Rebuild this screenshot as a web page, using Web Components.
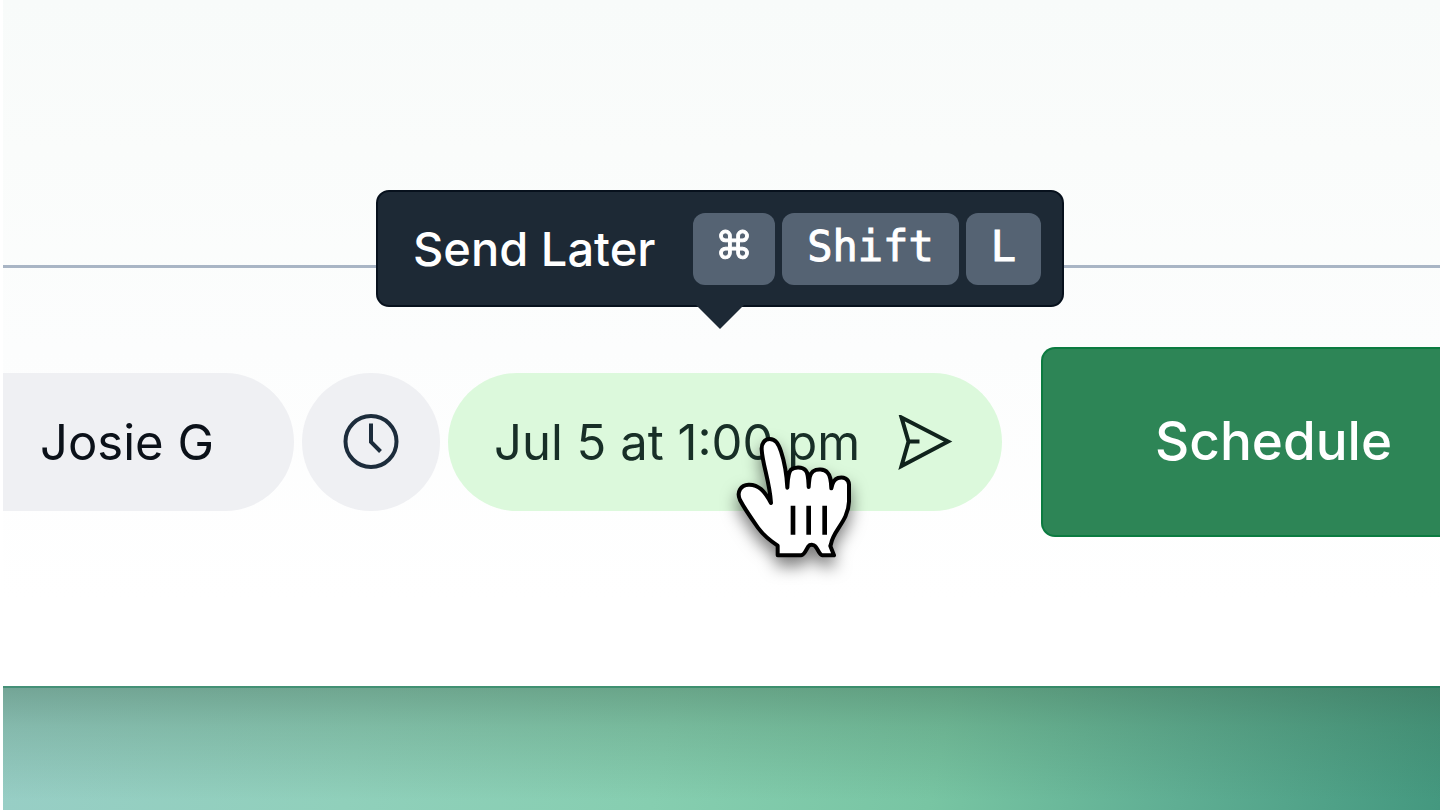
<!DOCTYPE html>
<html lang="en">
<head>
<meta charset="utf-8">
<meta name="viewport" content="width=device-width, initial-scale=1">
<title>Send Later</title>
<style>
body { margin: 0; background: #fff; font-family: Inter, "Liberation Sans", sans-serif; }
</style>
</head>
<body>
<compose-window>
  <compose-toolbar slot="toolbar">
    <compose-chip class="person" open-start>Josie G</compose-chip>
    <compose-chip round label="Reminder"><clock-icon></clock-icon></compose-chip>
    <compose-chip tone="green">Jul 5 at 1:00 pm<send-icon></send-icon><hand-cursor slot="over"></hand-cursor></compose-chip>
    <schedule-button>Schedule</schedule-button>
  </compose-toolbar>
  <shortcut-tooltip slot="tooltip">Send Later
    <key-cap slot="keys" symbol>⌘</key-cap>
    <key-cap slot="keys">Shift</key-cap>
    <key-cap slot="keys">L</key-cap>
  </shortcut-tooltip>
</compose-window>
<script>
function define(name, html) {
  const template = document.createElement('template');
  template.innerHTML = html;
  customElements.define(name, class extends HTMLElement {
    constructor() {
      super();
      this.attachShadow({ mode: 'open' }).append(template.content.cloneNode(true));
    }
    connectedCallback() {
      const label = this.getAttribute('label');
      const button = this.shadowRoot.querySelector('button');
      if (label && button) button.setAttribute('aria-label', label);
    }
  });
}

define('compose-window', `
<style>
:host { display: flex; flex-direction: column; min-height: 100vh; box-sizing: border-box; padding-left: 3px; position: relative; overflow: hidden; }
main { background: linear-gradient(#f8fbfa, #fafcfb 150px, #fcfdfd 350px, #fff 600px); }
.draft { height: 265px; border-bottom: 3px solid #a9b5c5; }
.backdrop { flex: 1; min-height: 124px; box-sizing: border-box; border-top: 2px solid rgba(0, 115, 75, .4);
  background:
    linear-gradient(rgba(55, 95, 70, .38), rgba(55, 100, 70, .2) 40px, rgba(55, 100, 70, 0) 115px) border-box,
    linear-gradient(102deg, #98cec6, #90d0bb 25%, #86ceb0 46%, #78c5a3 65%, #5fae93 82%, #44987f) border-box; }
</style>
<main><div class="draft"></div><slot name="toolbar"></slot></main>
<div class="backdrop"></div>
<slot name="tooltip"></slot>`);

define('compose-toolbar', `
<style>
:host { display: flex; align-items: center; gap: 8px; padding: 79px 0 149px; white-space: nowrap; }
</style>
<slot></slot>`);

define('compose-chip', `
<style>
:host { display: block; flex: none; position: relative; }
button { display: flex; align-items: center; gap: 38px; height: 138px; margin: 0; border: 0; border-radius: 69px; padding: 2px 48px 0 46px;
  background: #eff0f3; color: #0b1119; font: 400 49px/64px Inter, "Liberation Sans", sans-serif; }
:host([open-start]) button { border-radius: 0 69px 69px 0; padding: 2px 80px 0 37px; }
:host([round]) button { width: 138px; padding: 0; justify-content: center; }
:host([tone="green"]) button { background: #dcf9dc; color: #182f27; }
</style>
<button type="button"><slot></slot></button><slot name="over"></slot>`);

define('clock-icon', `
<style>:host { display: block; } svg { display: block; }</style>
<svg width="56" height="56" viewBox="0 0 56 56" fill="none" stroke="#1c2c3b" stroke-width="4">
<circle cx="28" cy="27.500" r="25.500"/><path d="M28 9.500V28l9.500 9.500"/></svg>`);

define('send-icon', `
<style>:host { display: block; } svg { display: block; }</style>
<svg width="56" height="56" viewBox="0 0 56 56" fill="none" stroke="#10231c" stroke-width="4">
<path d="M3.500 2.500 50 26.500 3.500 51 10.500 26.500ZM10.500 26.500h11"/></svg>`);

define('hand-cursor', `
<style>:host { display: block; position: absolute; left: 272px; top: 47px; pointer-events: none; }
svg { display: block; overflow: visible; filter: drop-shadow(0 9px 8px rgba(0, 0, 0, .5)); }</style>
<svg width="150" height="170" viewBox="0 0 450 510" fill="none" stroke="#000" stroke-width="12" stroke-linejoin="round" stroke-linecap="round">
<path fill="#fff" d="M125 88C124 70 134 57 149 57C167 57 175 71 183 94C192 121 199 148 202 203C204 174 204 158 213 149C224 140 247 140 257 151C265 160 265 172 266 201C268 175 269 162 279 154C291 146 313 147 322 157C331 166 333 178 334 205C337 188 341 178 354 174C371 169 386 177 387 193L387 245C385 304 338 332 333 372L331 378L342 406L307 406C298 405 295 389 286 379C281 373 270 372 265 379C258 389 254 405 243 406L173 406L173 377C140 355 127 341 116 326C97 299 75 269 60 240C49 216 62 195 86 194C116 193 134 214 153 249C149 184 127 132 125 88Z"/>
<path d="M219 257v87M266 257v87M314 257v87" stroke-width="14" stroke-linecap="butt"/></svg>`);

define('schedule-button', `
<style>
:host { display: block; flex: 1 0 auto; margin-left: 31px; }
button { display: block; width: 100%; height: 190px; margin: 0; padding: 0 0 2px 112px; border: 2px solid #0b7b40; border-right: 0; border-radius: 14px 0 0 14px;
  background: #2d8556; color: #fff; text-align: left; font: 500 53px/64px Inter, "Liberation Sans", sans-serif; }
</style>
<button type="button"><slot></slot></button>`);

define('shortcut-tooltip', `
<style>
:host { display: flex; align-items: center; justify-content: space-between; box-sizing: border-box; position: absolute; left: 50%; top: 190px; width: 688px; height: 117px; margin-left: -344px;
  padding: 0 21px 0 35px; border: 2px solid #07111d; border-radius: 13px; background: #1d2935; color: #fff; white-space: nowrap; font-size: 47px; line-height: 64px; font-weight: 500; }
:host::after { content: ""; position: absolute; left: 50%; top: 100%; width: 48px; height: 24px; margin-left: -24px; background: #1d2935; clip-path: polygon(0 0, 100% 0, 50% 100%); }
.keys { display: flex; gap: 7px; }
</style>
<span><slot></slot></span><span class="keys"><slot name="keys"></slot></span>`);

define('key-cap', `
<style>
:host { display: block; }
kbd { display: block; height: 72px; box-sizing: border-box; padding: 0 25px; border-radius: 12px; background: #556373; color: #fff; font: 400 42px/68px "DejaVu Sans Mono", monospace; -webkit-text-stroke: 1px #fff; }
:host([symbol]) kbd { font-size: 54px; }
</style>
<kbd><slot></slot></kbd>`);
</script>
</body>
</html>
